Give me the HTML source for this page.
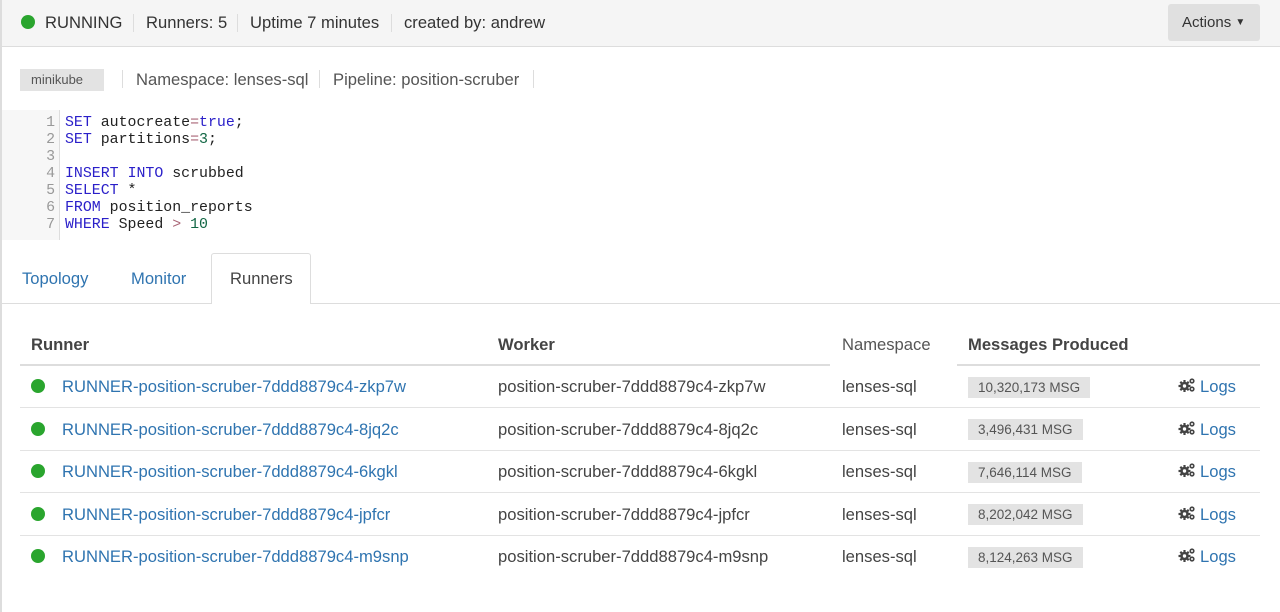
<!DOCTYPE html>
<html><head><meta charset="utf-8"><style>
*{box-sizing:border-box;margin:0;padding:0}
body{width:1280px;height:612px;overflow:hidden;background:#fff;font-family:"Liberation Sans",sans-serif;color:#333;position:relative}
.a{position:absolute;white-space:nowrap}
.t{font-size:16.6px}
.hdr{position:absolute;left:0;top:0;width:1280px;height:47px;background:#f5f5f5;border-bottom:1px solid #ddd}
.lb{position:absolute;left:0;top:0;width:2px;height:612px;background:#ddd}
.sep{position:absolute;width:1px;background:#ddd}
.code{font-family:"Liberation Mono",monospace;font-size:14.9px;line-height:17px}
.k{color:#2a1fc9}.n{color:#116644}
.blue{color:#2f74b0}
.dot{position:absolute;width:14px;height:14px;border-radius:50%;background:#2aa52e}
.hr{position:absolute;left:20px;width:1240px;height:1px;background:#e3e3e3}
.badge{position:absolute;height:21px;background:#e3e3e3;font-size:13.5px;color:#555;line-height:21px;padding:0 10px}
</style></head><body>
<div class="hdr"></div>
<div class="lb"></div>
<div class="dot" style="left:21px;top:15px"></div>
<div class="a t" style="left:45px;top:13px">RUNNING</div>
<div class="sep" style="left:133px;top:14px;height:18px"></div>
<div class="a t" style="left:146px;top:13px">Runners: 5</div>
<div class="sep" style="left:237px;top:14px;height:18px"></div>
<div class="a t" style="left:250px;top:13px">Uptime 7 minutes</div>
<div class="sep" style="left:391px;top:14px;height:18px"></div>
<div class="a t" style="left:404px;top:13px">created by: andrew</div>
<div class="a" style="left:1168px;top:4px;width:92px;height:37px;background:#e0e0e0;border-radius:3px;font-size:15px;line-height:37px;padding-left:14px">Actions <span style="font-size:10px;position:relative;top:-2px">&#9660;</span></div>

<div class="a" style="left:20px;top:69px;width:84px;height:22px;background:#e3e3e3;font-size:13px;color:#555;line-height:22px;padding-left:11px">minikube</div>
<div class="sep" style="left:122px;top:70px;height:18px"></div>
<div class="a t" style="left:136px;top:70px;color:#555">Namespace: lenses-sql</div>
<div class="sep" style="left:319px;top:70px;height:18px"></div>
<div class="a t" style="left:333px;top:70px;color:#555">Pipeline: position-scruber</div>
<div class="sep" style="left:533px;top:70px;height:18px"></div>

<div class="a" style="left:2px;top:110px;width:58px;height:130px;background:#f7f7f7;border-right:1px solid #ddd"></div>
<div class="a code" style="left:40px;top:115px;color:#999;text-align:right;width:15px">1<br>2<br>3<br>4<br>5<br>6<br>7</div>
<div class="a code" style="left:65px;top:115px;color:#222"><span class="k">SET</span> autocreate<span style="color:#a67">=</span><span class="k">true</span>;<br><span class="k">SET</span> partitions<span style="color:#a67">=</span><span class="n">3</span>;<br>&nbsp;<br><span class="k">INSERT</span> <span class="k">INTO</span> scrubbed<br><span class="k">SELECT</span> *<br><span class="k">FROM</span> position_reports<br><span class="k">WHERE</span> Speed <span style="color:#a67">&gt;</span> <span class="n">10</span></div>

<div class="a" style="left:2px;top:303px;width:1278px;height:1px;background:#ddd"></div>
<div class="a" style="left:211px;top:253px;width:100px;height:51px;background:#fff;border:1px solid #ddd;border-bottom:none;border-radius:3px 3px 0 0"></div>
<div class="a blue t" style="left:22px;top:269px">Topology</div>
<div class="a blue t" style="left:131px;top:269px">Monitor</div>
<div class="a t" style="left:230px;top:269px;color:#444">Runners</div>

<div class="a t" style="left:31px;top:335px;font-weight:bold;color:#444">Runner</div>
<div class="a t" style="left:498px;top:335px;font-weight:bold;color:#444">Worker</div>
<div class="a t" style="left:842px;top:335px;color:#555">Namespace</div>
<div class="a t" style="left:968px;top:335px;font-weight:bold;color:#444">Messages Produced</div>
<div class="a" style="left:20px;top:364px;width:810px;height:2px;background:#ddd"></div>
<div class="a" style="left:957px;top:364px;width:303px;height:2px;background:#ddd"></div>

<div id="rows"></div>
<script>
var d=[["zkp7w","10,320,173"],["8jq2c","3,496,431"],["6kgkl","7,646,114"],["jpfcr","8,202,042"],["m9snp","8,124,263"]];
var h="";
var gear='<svg width="18" height="16" viewBox="0 0 18 16" style="position:absolute;left:1178px;top:TOPpx"><g fill="#444"><circle cx="6.5" cy="9" r="4.3"/><g stroke="#444" stroke-width="2.2"><line x1="6.5" y1="3" x2="6.5" y2="15"/><line x1="0.5" y1="9" x2="12.5" y2="9"/><line x1="2.3" y1="4.8" x2="10.7" y2="13.2"/><line x1="2.3" y1="13.2" x2="10.7" y2="4.8"/></g><circle cx="6.5" cy="9" r="1.7" fill="#fff"/><circle cx="14" cy="4" r="2.6"/><circle cx="14" cy="12" r="2.6"/><circle cx="14" cy="4" r="1" fill="#fff"/><circle cx="14" cy="12" r="1" fill="#fff"/></g></svg>';
d.forEach(function(r,i){var c=386+i*42.5;
h+='<div class="dot" style="left:31px;top:'+(c-7)+'px"></div>';
h+='<div class="a blue t" style="left:62px;top:'+(c-9)+'px">RUNNER-position-scruber-7ddd8879c4-'+r[0]+'</div>';
h+='<div class="a t" style="left:498px;top:'+(c-9)+'px;color:#444">position-scruber-7ddd8879c4-'+r[0]+'</div>';
h+='<div class="a t" style="left:842px;top:'+(c-9)+'px;color:#444">lenses-sql</div>';
h+='<div class="badge" style="left:968px;top:'+(c-9.5)+'px">'+r[1]+' MSG</div>';
h+=gear.replace("TOP",c-9);
h+='<div class="a blue t" style="left:1200px;top:'+(c-9)+'px">Logs</div>';
if(i<4)h+='<div class="hr" style="top:'+Math.round(c+21)+'px"></div>';
});
document.getElementById("rows").innerHTML=h;
</script>
</body></html>
